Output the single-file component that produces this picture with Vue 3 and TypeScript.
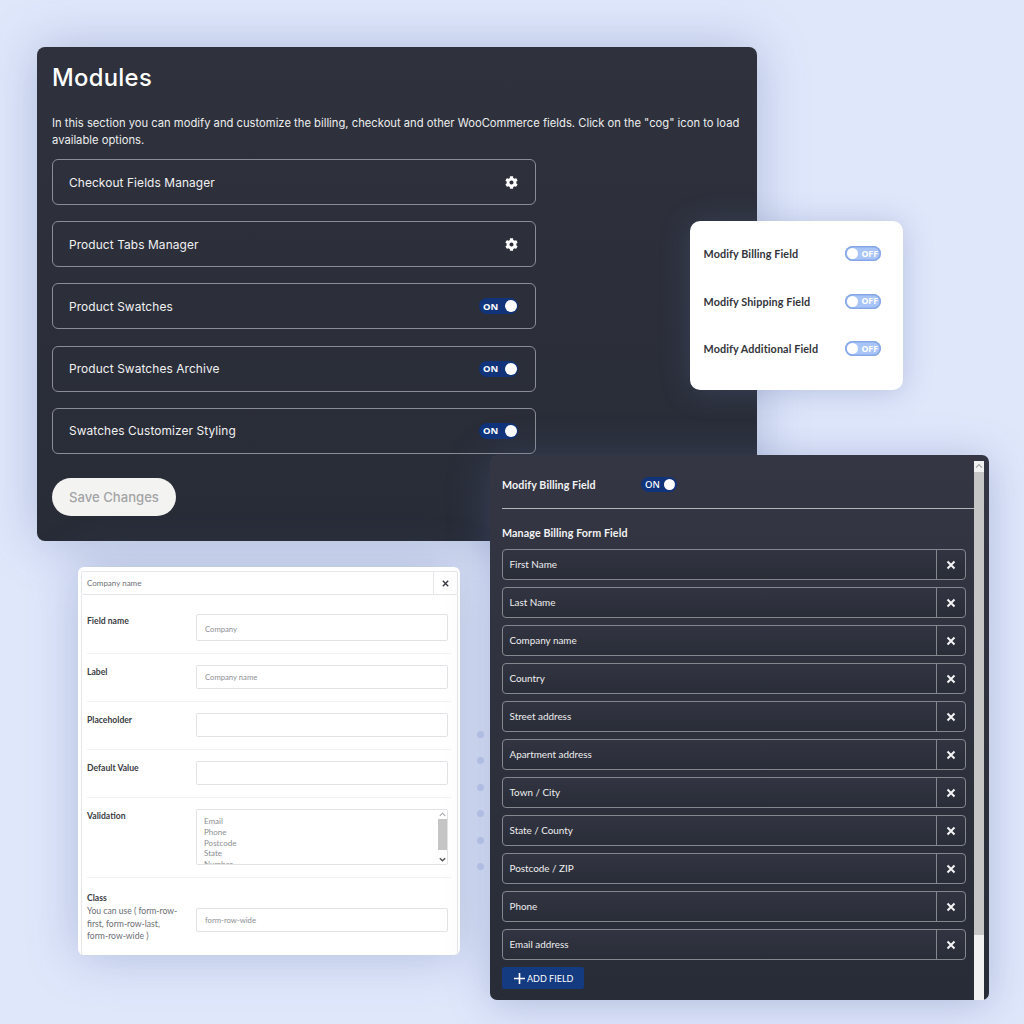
<script setup lang="ts">
const modules = [
  { name: 'Checkout Fields Manager', kind: 'cog' },
  { name: 'Product Tabs Manager', kind: 'cog' },
  { name: 'Product Swatches', kind: 'on' },
  { name: 'Product Swatches Archive', kind: 'on' },
  { name: 'Swatches Customizer Styling', kind: 'on' },
]
const offRows = ['Modify Billing Field', 'Modify Shipping Field', 'Modify Additional Field']
const fields = ['First Name', 'Last Name', 'Company name', 'Country', 'Street address', 'Apartment address', 'Town / City', 'State / County', 'Postcode / ZIP', 'Phone', 'Email address']
const dots = [0, 1, 2, 3, 4, 5]
const cog = 'M487.4 315.7l-42.6-24.6c4.3-23.2 4.3-47 0-70.2l42.6-24.6c4.9-2.8 7.1-8.6 5.5-14-11.1-35.6-30-67.8-54.7-94.6-3.8-4.1-10-5.1-14.8-2.3L380.8 110c-17.9-15.4-38.5-27.3-60.8-35.1V25.8c0-5.6-3.9-10.5-9.4-11.7-36.7-8.2-74.3-7.8-109.2 0-5.5 1.2-9.4 6.1-9.4 11.7V75c-22.2 7.9-42.8 19.8-60.8 35.1L88.7 85.5c-4.9-2.8-11-1.9-14.8 2.3-24.7 26.7-43.6 58.9-54.7 94.6-1.7 5.4.6 11.2 5.5 14L67.3 221c-4.3 23.2-4.3 47 0 70.2l-42.6 24.6c-4.9 2.8-7.1 8.6-5.5 14 11.1 35.6 30 67.8 54.7 94.6 3.8 4.1 10 5.1 14.8 2.3l42.6-24.6c17.9 15.4 38.5 27.3 60.8 35.1v49.2c0 5.6 3.9 10.5 9.4 11.7 36.7 8.2 74.3 7.8 109.2 0 5.5-1.2 9.4-6.1 9.4-11.7v-49.2c22.2-7.9 42.8-19.8 60.8-35.1l42.6 24.6c4.9 2.8 11 1.9 14.8-2.3 24.7-26.7 43.6-58.9 54.7-94.6 1.5-5.5-.7-11.3-5.6-14.1zM256 336c-44.1 0-80-35.9-80-80s35.9-80 80-80 80 35.9 80 80-35.9 80-80 80z'
</script>

<template>
  <main class="page">
    <div class="dots">
      <i v-for="d in dots" :key="d" class="dot"></i>
    </div>

    <section class="modules">
      <h1>Modules</h1>
      <p>In this section you can modify and customize the billing, checkout and other WooCommerce fields. Click on the "cog" icon to load available options.</p>
      <div class="module-list">
        <div v-for="m in modules" :key="m.name" class="module">
          <span>{{ m.name }}</span>
          <svg v-if="m.kind === 'cog'" class="cog" viewBox="0 0 512 512"><path fill="#fff" :d="cog" /></svg>
          <span v-else class="switch on"><b>ON</b><i></i></span>
        </div>
      </div>
      <button class="save">Save Changes</button>
    </section>

    <section class="toggles">
      <div v-for="r in offRows" :key="r" class="toggle-row">
        <strong>{{ r }}</strong>
        <span class="switch off"><i></i><b>OFF</b></span>
      </div>
    </section>

    <section class="form-card">
      <header class="form-head">
        <span>Company name</span>
        <em>
          <svg viewBox="0 0 10 10"><path d="M2 2l6 6M8 2l-6 6" stroke="#3a3d45" stroke-width="1.6" fill="none" /></svg>
        </em>
      </header>
      <div class="form-body">
        <div class="form-row first">
          <label>Field name</label>
          <div class="input tall"><span>Company</span></div>
        </div>
        <div class="form-row">
          <label>Label</label>
          <div class="input"><span>Company name</span></div>
        </div>
        <div class="form-row">
          <label>Placeholder</label>
          <div class="input"></div>
        </div>
        <div class="form-row">
          <label>Default Value</label>
          <div class="input"></div>
        </div>
        <div class="form-row">
          <label>Validation</label>
          <div class="select">
            <div class="options">
              <span>Email</span><span>Phone</span><span>Postcode</span><span>State</span><span>Number</span>
            </div>
            <div class="mini-scroll">
              <svg viewBox="0 0 10 8"><path d="M2 5.5l3-3 3 3" stroke="#a8a8a8" stroke-width="1.2" fill="none" /></svg>
              <u></u>
              <svg viewBox="0 0 10 8"><path d="M2 2.5l3 3 3-3" stroke="#505050" stroke-width="1.5" fill="none" /></svg>
            </div>
          </div>
        </div>
        <div class="form-row last">
          <div class="class-label">
            <label>Class</label>
            <small>You can use ( form-row-first, form-row-last, form-row-wide )</small>
          </div>
          <div class="input"><span>form-row-wide</span></div>
        </div>
      </div>
    </section>

    <section class="billing">
      <div class="billing-main">
        <div class="billing-top">
          <strong>Modify Billing Field</strong>
          <span class="switch on small"><b>ON</b><i></i></span>
        </div>
        <h2>Manage Billing Form Field</h2>
        <div class="field-list">
          <div v-for="f in fields" :key="f" class="field">
            <span>{{ f }}</span>
            <em>
              <svg viewBox="0 0 10 10"><path d="M1.5 1.5l7 7M8.5 1.5l-7 7" stroke="#f4f4f4" stroke-width="2" fill="none" /></svg>
            </em>
          </div>
        </div>
        <button class="add">
          <svg viewBox="0 0 12 12"><path d="M6 0v12M0 6h12" stroke="#fff" stroke-width="1.8" fill="none" /></svg>
          <span>ADD FIELD</span>
        </button>
      </div>
      <div class="scrollbar">
        <svg viewBox="0 0 10 10"><path d="M2 6.2l3-3 3 3" stroke="#a3a3a3" stroke-width="1.2" fill="none" /></svg>
        <u></u>
      </div>
    </section>
  </main>
</template>

<style>
html, body { margin: 0; background: #dfe7fb; }
</style>

<style scoped>
.page {
  position: relative;
  width: 1024px;
  height: 1024px;
  overflow: hidden;
  background: #dfe7fb;
  font-family: Inter, "Noto Sans", sans-serif;
}
.dots {
  position: absolute;
  left: 477px;
  top: 731px;
  display: flex;
  flex-direction: column;
  gap: 19.4px;
}
.dot {
  display: block;
  width: 7px;
  height: 7px;
  border-radius: 50%;
  background: #c4cff0;
}
.modules {
  position: absolute;
  left: 37px;
  top: 47px;
  width: 720px;
  height: 494px;
  box-sizing: border-box;
  padding: 0 15px;
  border-radius: 8px;
  background: linear-gradient(#2f323d, #282c37);
  color: #fff;
  box-shadow: 0 0 50px rgba(90, 105, 160, 0.35);
}
.modules h1 {
  margin: 14px 0 0;
  font-size: 23.8px;
  line-height: 33px;
  font-weight: 500;
  letter-spacing: 0.3px;
}
.modules p {
  margin: 21px 0 0;
  font-size: 11.22px;
  line-height: 17px;
  color: #eceded;
  width: 695px;
}
.module-list {
  margin-top: 10px;
  width: 484px;
  display: flex;
  flex-direction: column;
  gap: 16.2px;
}
.module {
  height: 46px;
  box-sizing: border-box;
  padding: 0 17px 0 16px;
  display: flex;
  align-items: center;
  justify-content: space-between;
  border: 1px solid #8b8d94;
  border-radius: 6px;
  font-size: 11.9px;
  letter-spacing: 0.1px;
  color: #f1f1f2;
}
.cog { width: 13px; height: 13px; }
.switch {
  display: inline-flex;
  align-items: center;
  box-sizing: border-box;
  border-radius: 9px;
  font-family: "Noto Sans", sans-serif;
}
.switch i {
  display: block;
  border-radius: 50%;
  background: #fff;
}
.switch b { font-weight: 700; color: #fff; }
.switch.on {
  width: 39px;
  height: 16px;
  padding: 0 1px 0 4px;
  justify-content: space-between;
  background: #10337a;
}
.switch.on b { font-size: 9.5px; }
.switch.on i { width: 12px; height: 12px; }
.switch.on.small {
  width: 36px;
  height: 15px;
  padding: 0 2px 0 4px;
}
.switch.on.small b { font-weight: 500; }
.switch.on.small i { width: 11px; height: 11px; }
.save {
  display: block;
  margin-top: 24px;
  width: 124px;
  height: 38px;
  padding: 0;
  border: 0;
  border-radius: 19px;
  background: #f3f3f2;
  color: #a3a4a5;
  font: 500 13.1px Inter, sans-serif;
}
.toggles {
  position: absolute;
  left: 690px;
  top: 221px;
  width: 213px;
  height: 169px;
  box-sizing: border-box;
  padding: 22px 22px 0 13.5px;
  display: flex;
  flex-direction: column;
  gap: 26.5px;
  border-radius: 10px;
  background: #fff;
  box-shadow: 0 2px 30px rgba(90, 105, 160, 0.3);
}
.toggle-row {
  height: 21px;
  display: flex;
  align-items: center;
  justify-content: space-between;
}
.toggle-row strong {
  font: 700 10.8px Lato, sans-serif;
  letter-spacing: 0.1px;
  color: #33353b;
}
.switch.off {
  width: 36px;
  height: 15px;
  padding: 0 3px 0 2px;
  justify-content: space-between;
  background: #a9c5f8;
  box-shadow: inset 0 0 0 1.5px #86a7e6;
}
.switch.off i { width: 11px; height: 11px; }
.switch.off b { font-size: 8.8px; font-weight: 700; }
.form-card {
  position: absolute;
  left: 78px;
  top: 567px;
  width: 382px;
  height: 388px;
  box-sizing: border-box;
  padding: 4px 2px 0 3px;
  border-radius: 6px;
  background: #fff;
  box-shadow: 0 0 50px rgba(90, 105, 160, 0.35);
  font-family: Lato, sans-serif;
}
.form-head {
  height: 24px;
  box-sizing: border-box;
  display: flex;
  align-items: stretch;
  justify-content: space-between;
  border: 1px solid #e6e7ea;
  border-radius: 2px;
  font-size: 8px;
  color: #6e7075;
}
.form-head span { align-self: center; padding-left: 5px; }
.form-head em {
  width: 23px;
  display: flex;
  align-items: center;
  justify-content: center;
  border-left: 1px solid #e6e7ea;
}
.form-head svg { width: 9px; height: 9px; }
.form-body {
  height: 360px;
  box-sizing: border-box;
  padding: 0 6px 0 5px;
  border: 1px solid #e6e7ea;
  border-top: 0;
  border-bottom: 0;
}
.form-row {
  display: flex;
  padding: 11px 0 12px;
  border-top: 1px solid #f0f1f3;
}
.form-row.first { border-top: 0; padding: 19px 0 12px; }
.form-row.last { padding: 13px 0 0; align-items: flex-start; }
.form-row label {
  display: block;
  flex: none;
  width: 109px;
  margin-top: 1px;
  font-size: 8.6px;
  line-height: 12px;
  font-weight: 700;
  color: #3a3c43;
}
.class-label { width: 109px; flex: none; }
.class-label small {
  display: block;
  margin-top: 1px;
  width: 92px;
  font-size: 8.6px;
  line-height: 12.5px;
  color: #6c6e73;
}
.input {
  flex: 1;
  height: 24px;
  box-sizing: border-box;
  margin-right: 3px;
  display: flex;
  align-items: center;
  padding-left: 8px;
  border: 1px solid #e2e3e7;
  border-radius: 2px;
  font-size: 7.7px;
  color: #8e9095;
}
.input.tall { height: 27px; }
.input.tall span { position: relative; top: 1px; }
.form-row.last .input { margin-top: 17px; height: 24px; }
.select {
  flex: 1;
  height: 56px;
  box-sizing: border-box;
  margin-right: 3px;
  display: flex;
  justify-content: space-between;
  overflow: hidden;
  border: 1px solid #e2e3e7;
  border-radius: 2px;
}
.options {
  display: flex;
  flex-direction: column;
  padding: 6px 0 0 7px;
  font-size: 8px;
  line-height: 10.8px;
  color: #8b8d92;
}
.mini-scroll {
  width: 9px;
  display: flex;
  flex-direction: column;
  background: #fff;
}
.mini-scroll svg { display: block; width: 9px; height: 9px; flex: none; }
.mini-scroll u { display: block; height: 31px; background: #c5c5c5; margin-bottom: auto; }
.billing {
  position: absolute;
  left: 490px;
  top: 455px;
  width: 499px;
  height: 545px;
  box-sizing: border-box;
  padding: 6px 5px 0 0;
  display: flex;
  border-radius: 7px;
  background: linear-gradient(#343743, #282c37);
  color: #fff;
  box-shadow: 0 4px 40px rgba(90, 105, 160, 0.35);
  font-family: Lato, sans-serif;
}
.billing-main {
  flex: 1;
  min-width: 0;
  padding: 0 8px 0 12px;
}
.billing-top {
  height: 47px;
  padding-bottom: 0;
  display: flex;
  align-items: center;
  margin-right: -8px;
  border-bottom: 1px solid #b4b6bb;
}
.billing-top strong {
  width: 139px;
  font-size: 10.7px;
  letter-spacing: 0.1px;
  font-weight: 700;
  color: #f3f3f4;
}
h2 {
  margin: 17px 0 0;
  font-size: 10.7px;
  letter-spacing: 0.1px;
  line-height: 14px;
  font-weight: 700;
  color: #f3f3f4;
}
.field-list {
  margin-top: 9px;
  display: flex;
  flex-direction: column;
  gap: 7px;
}
.field {
  height: 31px;
  box-sizing: border-box;
  display: flex;
  align-items: stretch;
  justify-content: space-between;
  border: 1px solid #85878e;
  border-radius: 4px;
  background: linear-gradient(#323541, #292d38);
  font-size: 9.9px;
  color: #eeeeef;
}
.field span { align-self: center; padding-left: 6.5px; position: relative; top: -0.5px; }
.field em {
  width: 28px;
  display: flex;
  align-items: center;
  justify-content: center;
  border-left: 1px solid #85878e;
}
.field svg { width: 10px; height: 10px; }
.add {
  margin-top: 7px;
  width: 82px;
  height: 22px;
  padding: 0 0 0 12px;
  display: flex;
  align-items: center;
  gap: 2px;
  border: 0;
  border-radius: 2px;
  background: #143a80;
  color: #fff;
  font: 400 9px Lato, sans-serif;
}
.add svg { width: 11px; height: 11px; }
.scrollbar {
  flex: none;
  width: 10px;
  height: 539px;
  background: #f1f1f1;
}
.scrollbar svg { display: block; width: 10px; height: 11px; }
.scrollbar u { display: block; height: 463px; background: #c6c6c6; }
</style>
